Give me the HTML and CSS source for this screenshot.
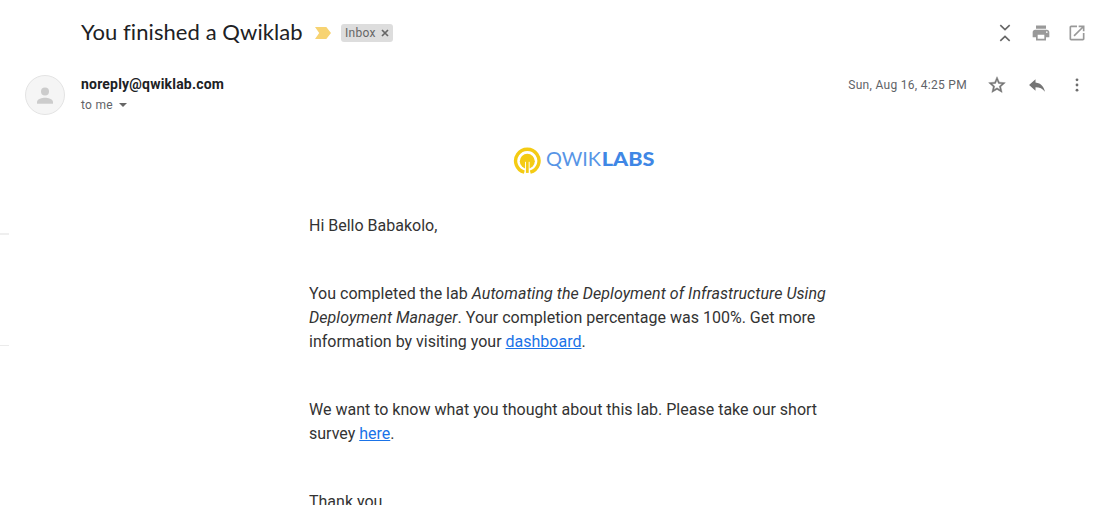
FILE: index.html
```html
<!DOCTYPE html>
<html lang="en">
<head>
<meta charset="utf-8">
<title>You finished a Qwiklab</title>
<link rel="stylesheet" href="styles.css">
</head>
<body>
<div class="edge"></div>
<main class="mail">
  <header class="subject">
    <h1 class="title">You finished a Qwiklab</h1>
    <svg class="marker" width="16" height="12" viewBox="0 0 16 12"><path fill="#f7d372" d="M0 0h11.3L16 6l-4.7 6H0l4.2-6z"/></svg>
    <span class="label">Inbox<svg width="8" height="8" viewBox="0 0 8 8"><path stroke="#666" stroke-width="1.7" d="M1 1l6 6M7 1L1 7"/></svg></span>
    <div class="tools">
      <svg width="20" height="20" viewBox="0 0 20 20"><path fill="none" stroke="#666" stroke-width="1.6" d="M5.3 2.2L10 6.7l4.7-4.5M5.3 17.8l4.7-4.5 4.7 4.5"/></svg>
      <svg width="20" height="20" viewBox="0 0 24 24"><path fill="#999" d="M19 8H5c-1.66 0-3 1.34-3 3v6h4v4h12v-4h4v-6c0-1.66-1.34-3-3-3zm-3 11H8v-5h8v5zm3-7c-.55 0-1-.45-1-1s.45-1 1-1 1 .45 1 1-.45 1-1 1zm-1-9H6v4h12V3z"/></svg>
      <svg width="20" height="20" viewBox="0 0 24 24"><path fill="#999" d="M19 19H5V5h7V3H5c-1.11 0-2 .9-2 2v14c0 1.1.89 2 2 2h14c1.1 0 2-.9 2-2v-7h-2v7zM14 3v2h3.59l-9.83 9.83 1.41 1.41L19 6.41V10h2V3h-7z"/></svg>
    </div>
  </header>
  <section class="sender">
    <svg class="avatar" width="40" height="40" viewBox="0 0 40 40"><circle cx="20" cy="20" r="19.5" fill="#f5f5f5" stroke="#e3e3e3"/><circle cx="20" cy="16.4" r="4" fill="#ccc"/><path fill="#ccc" d="M12 28.8v-2c0-2.7 5.3-4.1 8-4.1s8 1.4 8 4.1v2z"/></svg>
    <div class="who">
      <div class="from">noreply@qwiklab.com</div>
      <div class="to">to me<svg width="8" height="4" viewBox="0 0 8 4"><path fill="#666" d="M0 0h8L4 4z"/></svg></div>
    </div>
    <div class="date">Sun, Aug 16, 4:25 PM</div>
    <div class="actions">
      <svg width="20" height="20" viewBox="0 0 24 24"><path fill="#757575" stroke="#757575" stroke-width=".5" d="M22 9.24l-7.19-.62L12 2 9.19 8.63 2 9.24l5.46 4.73L5.82 21 12 17.27 18.18 21l-1.63-7.03L22 9.24zM12 15.4l-3.76 2.27 1-4.28-3.32-2.88 4.38-.38L12 6.1l1.71 4.04 4.38.38-3.32 2.88 1 4.28L12 15.4z"/></svg>
      <svg width="20" height="20" viewBox="0 0 24 24"><path fill="#757575" d="M10.2 9V5l-7.7 7 7.7 7v-4.4c5 0 8.6 1.6 11.3 5.4-1-5.4-4.3-10.2-11.3-11z"/></svg>
      <svg width="20" height="20" viewBox="0 0 20 20"><g fill="#6d6d6d"><circle cx="10" cy="4.8" r="1.4"/><circle cx="10" cy="10" r="1.4"/><circle cx="10" cy="15.2" r="1.4"/></g></svg>
    </div>
  </section>
  <article class="body">
    <div class="logo">
      <svg width="144" height="30" viewBox="0 0 144 30" role="img" aria-label="Qwiklabs">
        <path fill="none" stroke="#f4cb13" stroke-width="3.4" d="M11.3 27.2a11.7 11.7 0 1 1 6 0"/>
        <circle cx="14.3" cy="16.2" r="7.5" fill="#f4cb13"/>
        <path fill="#fff" d="M12 16.8h4.6V29H12z"/>
        <path fill="#f4cb13" d="M12.9 15.8h2.8v12.1h-2.8z"/>
        <text class="logo-thin" x="33" y="21" textLength="55" lengthAdjust="spacingAndGlyphs">QWIK</text>
        <text class="logo-bold" x="88.8" y="21" textLength="52.7" lengthAdjust="spacingAndGlyphs">LABS</text>
      </svg>
    </div>
    <p>Hi Bello Babakolo,</p>
    <p>You completed the lab <em>Automating the Deployment of Infrastructure Using<br>Deployment Manager</em>. Your completion percentage was 100%. Get more<br>information by visiting your <a href="#">dashboard</a>.</p>
    <p>We want to know what you thought about this lab. Please take our short<br>survey <a href="#">here</a>.</p>
    <p>Thank you</p>
  </article>
</main>
</body>
</html>
```

FILE: styles.css
```css
* { box-sizing: border-box; }
body {
  margin: 0;
  height: 505px;
  overflow: hidden;
  background: #fff;
  font-family: Roboto, sans-serif;
  color: #333;
}
svg { display: block; flex: none; }
.mail { padding: 13px 15px 0 25px; }
.edge {
  position: absolute;
  left: 0;
  top: 233px;
  width: 9px;
  height: 113px;
  border-top: 2px solid #efefef;
  border-bottom: 1px solid #ebebeb;
}
.subject { display: flex; align-items: center; height: 40px; padding-left: 56px; }
.title {
  margin: 0;
  width: 234px;
  padding-bottom: 2px;
  font: 400 22px/28px Lato, sans-serif;
  letter-spacing: 0.08px;
  color: #202124;
  white-space: nowrap;
}
.label {
  display: flex;
  align-items: center;
  gap: 5px;
  width: 52px;
  height: 18px;
  margin-left: 10px;
  padding-left: 4px;
  border-radius: 3px;
  background: #ddd;
  color: #666;
  font-size: 12px;
  letter-spacing: 0.3px;
}
.tools, .actions { display: flex; gap: 16px; }
.tools { margin-left: auto; }
.sender { display: flex; height: 56px; padding-top: 22px; }
.avatar { margin-right: 16px; }
.from {
  height: 20px;
  font-size: 14px;
  font-weight: 700;
  line-height: 18px;
  letter-spacing: 0.2px;
  color: #202124;
}
.to {
  display: flex;
  align-items: center;
  gap: 6px;
  font-size: 12px;
  line-height: 20px;
  letter-spacing: 0.3px;
  color: #5f6368;
}
.date {
  margin-left: auto;
  font-size: 12px;
  line-height: 20px;
  letter-spacing: 0.3px;
  color: #5f6368;
}
.actions { gap: 20px; margin-left: 20px; }
.body { margin-left: 284px; font-size: 16px; line-height: 24px; white-space: nowrap; }
.body p { margin: 0 0 44px; }
.body em { letter-spacing: 0.055px; }
.body a { color: #1a73e8; text-decoration: underline; }
.logo { height: 105px; padding: 36px 0 0 204px; }
.logo-thin, .logo-bold { font-family: Lato, sans-serif; font-size: 19px; fill: #3f87e5; }
.logo-thin { font-weight: 400; fill: #5795e6; }
.logo-bold { font-weight: 900; }
```
